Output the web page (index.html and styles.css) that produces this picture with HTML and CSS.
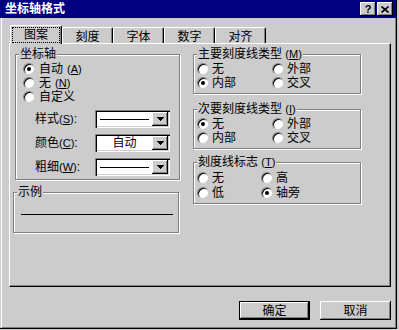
FILE: index.html
```html
<!DOCTYPE html>
<html lang="zh-CN">
<head>
  <meta charset="UTF-8" />
  <title>坐标轴格式</title>
  <link rel="stylesheet" href="styles.css">
</head>
<body>

  <div class="window">
    <div class="titlebar">
      <span class="title">坐标轴格式</span>
      <span class="cap-btn help">?</span>
      <span class="cap-btn close">
        <svg width="8" height="7" viewBox="0 0 8 7"><path d="M0.5 0.5L7.5 6.5M7.5 0.5L0.5 6.5" stroke="#000" stroke-width="1.6"/></svg>
      </span>
    </div>

    <div class="client">
      <div class="tabs">
        <div class="tab active"><span class="focus">图案</span></div>
        <div class="tab">刻度</div>
        <div class="tab">字体</div>
        <div class="tab">数字</div>
        <div class="tab">对齐</div>
      </div>

      <div class="panel">
        <div class="col">
          <fieldset class="group axis">
            <legend>坐标轴</legend>
            <div class="opt-list">
              <div class="opt"><span class="radio on"></span>自动<span class="key">(<u>A</u>)</span></div>
              <div class="opt"><span class="radio"></span>无<span class="key">(<u>N</u>)</span></div>
              <div class="opt"><span class="radio"></span>自定义</div>
            </div>
            <div class="fields">
              <span class="field-label">样式<span class="key">(<u>S</u>)</span>:</span>
              <div class="combo">
                <div class="combo-value"><span class="line-sample"></span></div>
                <span class="combo-arrow"><svg width="7" height="4" viewBox="0 0 7 4"><path d="M0 0h7v1h-1v1h-1v1h-1v1h-1v-1h-1v-1h-1v-1h-1z"/></svg></span>
              </div>
              <span class="field-label">颜色<span class="key">(<u>C</u>)</span>:</span>
              <div class="combo">
                <div class="combo-value centered">自动</div>
                <span class="combo-arrow"><svg width="7" height="4" viewBox="0 0 7 4"><path d="M0 0h7v1h-1v1h-1v1h-1v1h-1v-1h-1v-1h-1v-1h-1z"/></svg></span>
              </div>
              <span class="field-label">粗细<span class="key">(<u>W</u>)</span>:</span>
              <div class="combo">
                <div class="combo-value"><span class="line-sample"></span></div>
                <span class="combo-arrow"><svg width="7" height="4" viewBox="0 0 7 4"><path d="M0 0h7v1h-1v1h-1v1h-1v1h-1v-1h-1v-1h-1v-1h-1z"/></svg></span>
              </div>
            </div>
          </fieldset>

          <fieldset class="group sample">
            <legend>示例</legend>
            <div class="sample-line"></div>
          </fieldset>
        </div>

        <div class="col">
          <fieldset class="group ticks">
            <legend>主要刻度线类型 <span class="key">(<u>M</u>)</span></legend>
            <div class="opt-grid">
              <div class="opt"><span class="radio"></span>无</div>
              <div class="opt"><span class="radio"></span>外部</div>
              <div class="opt"><span class="radio on"></span>内部</div>
              <div class="opt"><span class="radio"></span>交叉</div>
            </div>
          </fieldset>

          <fieldset class="group ticks">
            <legend>次要刻度线类型 <span class="key">(<u>I</u>)</span></legend>
            <div class="opt-grid">
              <div class="opt"><span class="radio on"></span>无</div>
              <div class="opt"><span class="radio"></span>外部</div>
              <div class="opt"><span class="radio"></span>内部</div>
              <div class="opt"><span class="radio"></span>交叉</div>
            </div>
          </fieldset>

          <fieldset class="group labels">
            <legend>刻度线标志 <span class="key">(<u>T</u>)</span></legend>
            <div class="opt-grid">
              <div class="opt"><span class="radio"></span>无</div>
              <div class="opt"><span class="radio"></span>高</div>
              <div class="opt"><span class="radio"></span>低</div>
              <div class="opt"><span class="radio on"></span>轴旁</div>
            </div>
          </fieldset>
        </div>
      </div>

      <div class="actions">
        <button class="btn default">确定</button>
        <button class="btn">取消</button>
      </div>
    </div>
  </div>

</body>
</html>
```

FILE: styles.css
```css
:root {
  --face: #cccccc;
  --shadow: #808080;
  --light: #ffffff;
  --dark: #000000;
  --title: #000080;
}

* {
  box-sizing: border-box;
}

body {
  margin: 0;
  background: var(--face);
  font-family: 'Liberation Sans', 'Noto Sans CJK SC', sans-serif;
  font-size: 12px;
  line-height: 14px;
  color: #000;
}

.window {
  width: 397px;
  height: 329px;
  display: flex;
  flex-direction: column;
  background: var(--face);
  border-right: 1px solid var(--dark);
  border-bottom: 1px solid var(--dark);
}

/* title bar */
.titlebar {
  height: 18px;
  flex: none;
  display: flex;
  align-items: center;
  padding: 0 3px 0 5px;
  background: var(--title);
  color: #fff;
}

.title {
  flex: 1;
  font-weight: bold;
  font-size: 12px;
}

.cap-btn {
  width: 16px;
  height: 14px;
  display: flex;
  align-items: center;
  justify-content: center;
  background: var(--face);
  color: #000;
  font-weight: bold;
  font-size: 11px;
  line-height: 11px;
  box-shadow: inset -1px -1px var(--dark), inset 1px 1px var(--light), inset -2px -2px var(--shadow);
}

.help {
  margin-right: 1px;
}

/* client area */
.client {
  flex: 1;
  display: flex;
  flex-direction: column;
  margin-left: 1px;
  border-left: 1px solid var(--light);
  border-right: 1px solid var(--shadow);
  border-bottom: 1px solid var(--shadow);
  padding: 7px 4px 0 7px;
}

.tabs {
  display: flex;
  align-items: flex-end;
  height: 18px;
  padding-left: 1px;
}

.tab {
  width: 51px;
  height: 16px;
  padding-top: 2px;
  text-align: center;
  border-top: 1px solid var(--light);
  border-left: 1px solid var(--light);
  border-right: 1px solid var(--dark);
  border-radius: 2px 2px 0 0;
  box-shadow: inset -1px 0 var(--shadow);
  background: var(--face);
}

.tab.active {
  width: 52px;
  height: 19px;
  padding-top: 2px;
  margin-bottom: -1px;
  position: relative;
  z-index: 1;
}

.focus {
  display: inline-block;
  height: 14px;
  padding: 0 11px;
  outline: 1px dotted var(--dark);
}

.panel {
  width: 382px;
  height: 244px;
  flex: none;
  display: grid;
  grid-template-columns: 165px 168px;
  column-gap: 13px;
  align-content: start;
  align-items: start;
  padding: 3px 0 0 5px;
  border: 1px solid;
  border-color: var(--light) var(--dark) var(--dark) var(--light);
  box-shadow: inset -1px -1px var(--shadow);
}

/* group boxes */
.group {
  margin: 0;
  padding: 0 3px 3px 3px;
  min-width: 0;
  border: 1px solid var(--shadow);
  box-shadow: inset 1px 1px var(--light), 1px 1px var(--light);
}

.group legend {
  padding: 0 1px;
  line-height: 14px;
  background: var(--face);
}

.key {
  font-size: 11px;
}

.opt {
  display: flex;
  align-items: center;
  gap: 3px;
  height: 14px;
  white-space: nowrap;
}

.radio {
  width: 12px;
  height: 12px;
  flex: none;
  display: flex;
  align-items: center;
  justify-content: center;
  border-radius: 50%;
  background: #fff;
  border: 1px solid;
  border-color: var(--shadow) var(--face) var(--face) var(--shadow);
  box-shadow: inset 1px 1px var(--dark);
}

.radio.on::after {
  content: '';
  width: 4px;
  height: 4px;
  border-radius: 50%;
  background: var(--dark);
}

.axis {
  padding-bottom: 3px;
}

.axis .opt-list {
  padding: 1px 0 0 4px;
}

.axis .opt {
  gap: 4px;
}

.fields {
  display: grid;
  grid-template-columns: 60px 75px;
  row-gap: 6px;
  align-items: center;
  margin: 6px 0 0 16px;
}

.field-label {
  white-space: nowrap;
}

.combo {
  height: 18px;
  display: flex;
  padding: 2px;
  background: #fff;
  box-shadow: inset 1px 1px var(--shadow), inset 2px 2px var(--dark), inset -1px -1px var(--light), inset -2px -2px var(--face);
}

.combo-value {
  flex: 1;
  display: flex;
  align-items: center;
}

.combo-value.centered {
  justify-content: center;
}

.line-sample {
  width: 49px;
  height: 1px;
  margin-left: 3px;
  background: var(--dark);
}

.combo-arrow {
  width: 16px;
  display: flex;
  align-items: center;
  justify-content: center;
  background: var(--face);
  box-shadow: inset -1px -1px var(--dark), inset 1px 1px var(--light), inset -2px -2px var(--shadow);
}

.sample {
  margin: 5px 1px 0 -2px;
  padding: 0 3px 0 3px;
}

.sample-line {
  height: 1px;
  width: 152px;
  margin: 15px 0 17px 4px;
  background: var(--dark);
}

.ticks + .ticks {
  margin-top: 8px;
}

.labels {
  margin-top: 6px;
}

.opt-grid {
  display: grid;
  grid-template-columns: 75px auto;
  padding-top: 1px;
}

.labels .opt-grid {
  grid-template-columns: 64px auto;
}

.labels .opt {
  height: 15px;
}

/* buttons */
.actions {
  display: flex;
  justify-content: flex-end;
  gap: 10px;
  margin-top: 14px;
}

.btn {
  width: 71px;
  height: 19px;
  padding: 0;
  border: none;
  font: inherit;
  line-height: 14px;
  color: #000;
  background: var(--face);
  box-shadow: inset -1px -1px var(--dark), inset 1px 1px var(--light), inset -2px -2px var(--shadow);
}

.btn.default {
  box-shadow: inset 0 0 0 1px var(--dark), inset -2px -2px var(--dark), inset 2px 2px var(--light), inset -3px -3px var(--shadow);
}
```
